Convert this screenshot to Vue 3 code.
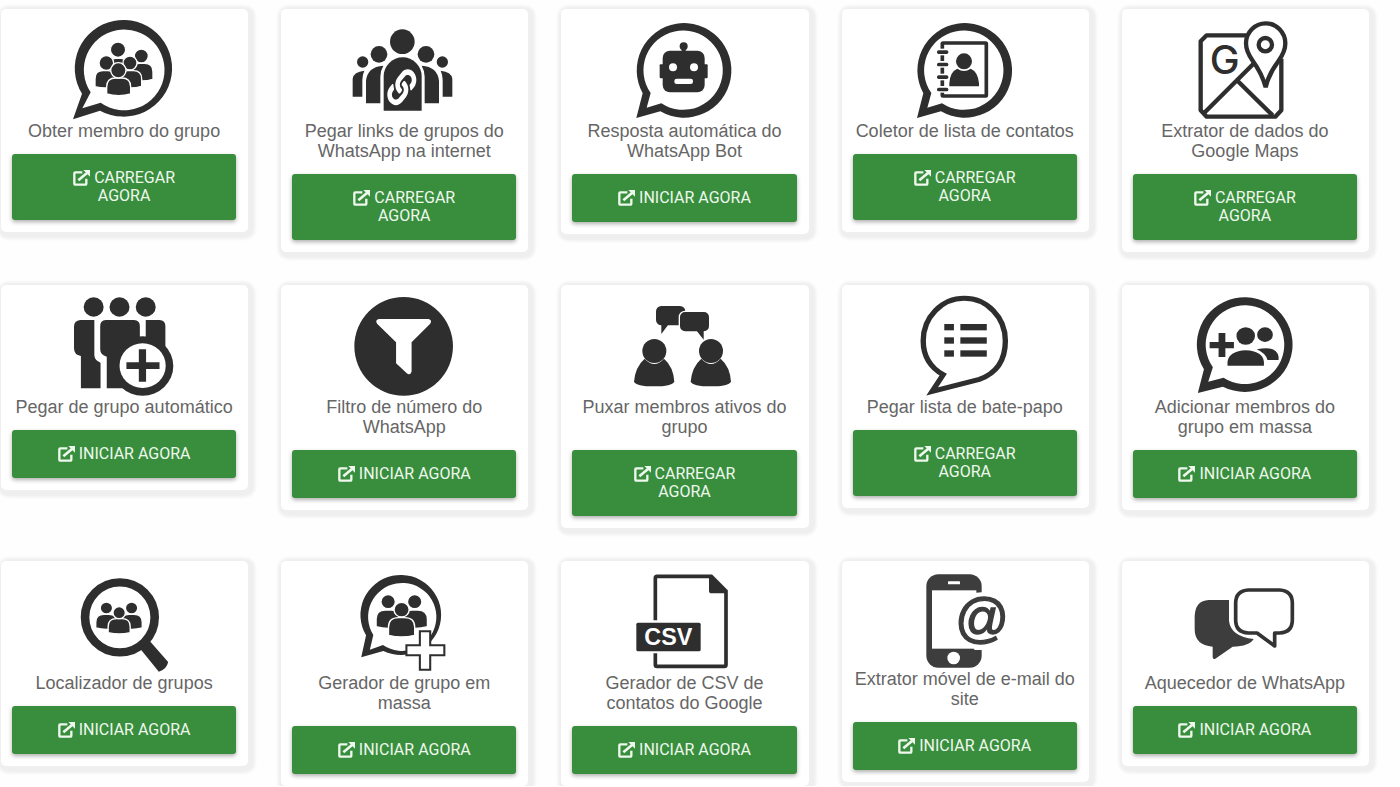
<script setup>
// Rounded head-and-shoulders torso between two x edges
const torso = (l, r, t, b) => {
  const w = r - l
  const k = Math.round(w * 0.38)
  const d = Math.round(w * 0.07)
  return `M${l} ${b - d}V${t + k}Q${l} ${t} ${l + k} ${t}H${r - k}Q${r} ${t} ${r} ${t + k}V${b - d}Q${(l + r) / 2} ${b + d} ${l} ${b - d}Z`
}
const person = (cx, cy, r, left, right, top, bottom) => ({ cx, cy, r, d: torso(left, right, top, bottom) })

const crowds = {
  members: [
    person(357, 149, 22, 328, 388, 175, 225),
    person(427, 168, 20, 396, 462, 190, 243),
    person(322, 189, 21, 288, 350, 212, 264),
    person(393, 189, 20, 362, 428, 212, 264),
    person(358, 211, 22, 323, 395, 234, 287)
  ],
  finder: [
    person(310, 176, 17, 279, 341, 195, 240),
    person(383, 176, 17, 352, 414, 195, 240),
    person(347, 190, 17, 315, 379, 208, 254)
  ],
  creator: [
    person(1129, 157, 20, 1094, 1166, 182, 237),
    person(1206, 157, 20, 1170, 1243, 182, 237),
    person(1168, 181, 21, 1130, 1206, 205, 263)
  ]
}

const LOAD = 'Carregar agora'
const START = 'Iniciar agora'

const cards = [
  { icon: 'members', box: '225 63 300 300', title: 'Obter membro do grupo', action: LOAD },
  { icon: 'links', box: '226 63 300 300', title: 'Pegar links de grupos do WhatsApp na internet', action: LOAD },
  { icon: 'bot', box: '226 63 300 300', title: 'Resposta automática do WhatsApp Bot', action: START },
  { icon: 'contacts', box: '227 63 300 300', title: 'Coletor de lista de contatos', action: LOAD },
  { icon: 'maps', box: '227 63 300 300', title: 'Extrator de dados do Google Maps', action: LOAD },
  { icon: 'autogroup', box: '216 81 290 300', title: 'Pegar de grupo automático', action: START },
  { icon: 'filter', box: '1030 81 290 300', title: 'Filtro de número do WhatsApp', action: START },
  { icon: 'active', box: '226 81 300 300', title: 'Puxar membros ativos do grupo', action: LOAD },
  { icon: 'chatlist', box: '210 81 280 300', title: 'Pegar lista de bate-papo', action: LOAD },
  { icon: 'addmembers', box: '994 81 280 300', title: 'Adicionar membros do grupo em massa', action: START },
  { icon: 'finder', box: '216 71 290 300', title: 'Localizador de grupos', action: START },
  { icon: 'creator', box: '1030 71 290 300', title: 'Gerador de grupo em massa', action: START },
  { icon: 'csv', box: '226 71 300 300', title: 'Gerador de CSV de contatos do Google', action: START },
  { icon: 'mobile', box: '227 71 300 288', title: 'Extrator móvel de e-mail do site', action: START },
  { icon: 'warmer', box: '227 71 300 300', title: 'Aquecedor de WhatsApp', action: START }
]
</script>

<template>
  <main class="tools">
    <article v-for="card in cards" :key="card.icon" class="card">
      <svg class="art" :class="{ short: card.icon === 'mobile' }" :viewBox="card.box" preserveAspectRatio="none" aria-hidden="true">
        <path v-if="card.icon === 'members'" fill-rule="evenodd"
          d="M249 281A146 145 0 1 1 303 332L222 358ZM275 277A121 121 0 1 1 305 308L250 325Z" />

        <g v-else-if="card.icon === 'links'">
          <circle cx="371" cy="125" r="37" />
          <path d="M315 332V229A57 57 0 0 1 429 229V332Z" />
          <g v-for="side in ['', 'translate(743 0) scale(-1 1)']" :key="side" :transform="side">
            <circle cx="301" cy="163" r="25" />
            <circle cx="252" cy="186" r="17" />
            <path d="M262 310V243Q266 200 314 197Q306 210 305 230V310Z" />
            <path d="M222 290V236Q225 215 257 212Q251 225 251 240V290Z" />
          </g>
          <path class="white" transform="translate(326 208) scale(.17 .21)"
            d="M326.612 185.391c59.747 59.809 58.927 155.698.36 214.59-.11.12-.24.25-.36.37l-67.2 67.2c-59.27 59.27-155.699 59.262-214.96 0-59.27-59.26-59.27-155.7 0-214.96l37.106-37.106c9.84-9.84 26.786-3.3 27.294 10.606.648 17.722 3.826 35.527 9.69 52.721 1.986 5.822.567 12.262-3.783 16.612l-13.087 13.087c-28.026 28.026-28.905 73.66-1.155 101.96 28.024 28.579 74.086 28.749 102.325.51l67.2-67.19c28.191-28.191 28.073-73.757 0-101.83-3.701-3.694-7.429-6.564-10.341-8.569a16.037 16.037 0 0 1-6.947-12.606c-.396-10.567 3.348-21.456 11.698-29.806l21.054-21.055c5.521-5.521 14.182-6.199 20.584-1.731a152.482 152.482 0 0 1 20.522 17.197zM467.547 44.449c-59.261-59.262-155.69-59.27-214.96 0l-67.2 67.2c-.12.12-.25.25-.36.37-58.566 58.892-59.387 154.781.36 214.59a152.454 152.454 0 0 0 20.521 17.196c6.402 4.468 15.064 3.789 20.584-1.731l21.054-21.055c8.35-8.35 12.094-19.239 11.698-29.806a16.037 16.037 0 0 0-6.947-12.606c-2.912-2.005-6.64-4.875-10.341-8.569-28.073-28.073-28.191-73.639 0-101.83l67.2-67.19c28.239-28.239 74.3-28.069 102.325.51 27.75 28.3 26.872 73.934-1.155 101.96l-13.087 13.087c-4.35 4.35-5.769 10.79-3.783 16.612 5.864 17.194 9.042 34.999 9.69 52.721.509 13.906 17.454 20.446 27.294 10.606l37.106-37.106c59.271-59.259 59.271-155.699.001-214.959z" />
        </g>

        <g v-else-if="card.icon === 'bot'">
          <path fill-rule="evenodd" d="M252 280A142 142 0 1 1 305 334L233 354ZM276 279A119 119 0 1 1 308 310L264 323Z" />
          <circle cx="375" cy="139" r="12" />
          <rect x="369" y="140" width="12" height="20" />
          <rect x="312" y="152" width="126" height="125" rx="22" />
          <rect x="303" y="193" width="144" height="42" rx="3" />
          <circle class="white" cx="343" cy="202" r="12" />
          <circle class="white" cx="406" cy="202" r="12" />
          <rect class="white" x="347" y="236" width="56" height="16" rx="7" />
        </g>

        <g v-else-if="card.icon === 'contacts'">
          <path fill-rule="evenodd" d="M252 280A142 142 0 1 1 305 334L233 354ZM276 279A119 119 0 1 1 308 310L264 323Z" />
          <rect class="line" x="309" y="129" width="132" height="159" rx="2" stroke-width="11" />
          <g v-for="y in [156, 193, 231, 268]" :key="y">
            <rect class="white" x="300" :y="y - 10" width="22" height="20" />
            <rect x="293" :y="y - 5" width="34" height="11" rx="5" />
          </g>
          <path d="M330 259V250Q332 215 354 206Q374 220 394 206Q416 215 419 250V259Z" />
          <circle cx="374" cy="184" r="24" />
        </g>

        <g v-else-if="card.icon === 'maps'">
          <g class="line" stroke-width="13">
            <path d="M384 106H262L244 124V331L262 350H468L486 331V176" stroke-linejoin="round" />
            <path d="M252 341L404 190M352 240L460 346" />
            <path class="paper" d="M439 262Q429 222 400 182Q380 155 380 130A59 60 0 0 1 498 130Q498 155 478 182Q448 222 439 262Z" />
            <circle cx="438" cy="134" r="20" />
          </g>
          <text class="letter" x="316" y="221" font-size="120">G</text>
        </g>

        <g v-else-if="card.icon === 'autogroup'">
          <circle cx="273" cy="111" r="29" />
          <circle cx="348" cy="111" r="29" />
          <circle cx="424" cy="111" r="29" />
          <path d="M234 150H275V256Q276 272 293 278V355H236V258Q216 255 216 235V170Q216 152 234 150Z" />
          <path d="M308 150H390Q407 152 407 168V300H370V355H311V260Q292 255 292 238V168Q292 152 308 150Z" />
          <path d="M424 150H464Q481 152 481 168V250H424Z" />
          <circle cx="415" cy="288" r="89" />
          <circle class="white" cx="415" cy="287" r="67" />
          <path d="M404 238H425V277H464V297H425V335H404V297H368V277H404Z" />
        </g>

        <g v-else-if="card.icon === 'filter'">
          <ellipse cx="1174" cy="229" rx="143" ry="148" />
          <path class="white" d="M1102 147H1246Q1258 150 1251 161L1197 217V305Q1192 318 1183 310L1152 280V217L1097 161Q1090 150 1102 147Z" />
        </g>

        <g v-else-if="card.icon === 'active'">
          <rect x="292" y="108" width="88" height="58" rx="16" />
          <path d="M308 160V192L332 160Z" />
          <rect class="edged" x="362" y="124" width="91" height="62" rx="17" />
          <path d="M412 180L435 209V180Z" />
          <g v-for="dx in [0, 170]" :key="dx" :transform="`translate(${dx} 0)`">
            <path d="M226 335Q230 290 258 266Q287 298 316 266Q344 290 347 335Q340 349 287 349Q232 349 226 335Z" />
            <circle cx="287" cy="243" r="36" />
          </g>
        </g>

        <g v-else-if="card.icon === 'chatlist'">
          <path class="line" stroke-width="15" d="M289 314Q233 280 233 212A115 127 0 0 1 463 212Q463 300 390 328L258 364Z" />
          <g v-for="y in [162, 202, 241]" :key="y">
            <rect x="292" :y="y" width="27" height="19" />
            <rect x="337" :y="y" width="74" height="19" />
          </g>
        </g>

        <g v-else-if="card.icon === 'addmembers'">
          <path fill-rule="evenodd" d="M1019 298A134 142 0 1 1 1072 350L1002 369ZM1044 292A110 118 0 1 1 1074 323L1031 335Z" />
          <path d="M1060 189H1079V216H1103V235H1079V261H1060V235H1035V216H1060Z" />
          <circle cx="1136" cy="198" r="26" />
          <circle cx="1190" cy="194" r="22" />
          <path d="M1085 287V275Q1090 243 1136 241Q1183 243 1187 275V287Z" />
          <path d="M1167 238Q1222 225 1228 260V270H1197Q1192 250 1167 238Z" />
        </g>

        <g v-else-if="card.icon === 'finder'">
          <ellipse class="line" cx="349" cy="204" rx="101" ry="105" stroke-width="25" />
          <path d="M408 298L435 274L489 338Q485 360 462 367Z" />
        </g>

        <path v-else-if="card.icon === 'creator'" fill-rule="evenodd"
          d="M1065 258A117 120 0 1 1 1115 305L1051 324ZM1086 257A99 102 0 1 1 1114 287L1076 301Z" />

        <g v-else-if="card.icon === 'csv'">
          <path class="line" stroke-width="11" d="M290 213V86Q290 81 295 81H458L502 125V346Q502 351 497 351H295Q290 351 290 346V312" />
          <path d="M451 78V125Q451 132 459 132H505L458 78Z" />
          <rect x="233" y="220" width="193" height="86" rx="5" />
          <text class="tag" x="329" y="288" font-size="70">CSV</text>
        </g>

        <g v-else-if="card.icon === 'mobile'" class="slate">
          <rect x="261" y="75" width="166" height="280" rx="36" />
          <rect class="white" x="278" y="123" width="133" height="175" />
          <rect class="white" x="405" y="131" width="26" height="171" />
          <rect class="white" x="326" y="96" width="36" height="9" rx="2" />
          <circle class="white" cx="343" cy="326" r="19" />
          <ellipse class="white" cx="427" cy="215" rx="84" ry="86" />
          <text class="at" x="428" y="260" font-size="160">@</text>
        </g>

        <g v-else class="slate">
          <path d="M268 152H329V215Q335 262 403 269Q390 291 340 292L288 328Q280 332 280 322V292Q226 288 226 240V200Q228 154 268 152Z" />
          <path class="line" stroke-width="11"
            d="M387 122H481Q519 124 519 162V212Q519 249 481 251H466V290L413 251H387Q349 249 349 212V162Q349 124 387 122Z" stroke-linejoin="round" />
        </g>

        <g v-for="(p, i) in crowds[card.icon] || []" :key="i" class="edged">
          <path :d="p.d" />
          <circle :cx="p.cx" :cy="p.cy" :r="p.r + 1" />
        </g>
        <path v-if="card.icon === 'creator'" class="line paper" stroke-width="6"
          d="M1221 246H1251V288H1292V318H1251V361H1221V318H1182V288H1221Z" />
      </svg>
      <h2 class="title">{{ card.title }}</h2>
      <button class="action" type="button">
        <svg class="launch" viewBox="0 0 51 48" aria-hidden="true">
          <path d="M28 7H7Q4 7 4 10V41Q4 44 7 44H37Q40 44 40 41V26" stroke-width="7" />
          <path d="M16 31L42 9" stroke-width="8" />
          <path class="head" d="M31 0H51V20Z" />
        </svg>
        {{ card.action }}
      </button>
    </article>
  </main>
</template>

<style>
body {
  margin: 0;
  background: #fefefe;
}
</style>

<style scoped>
.tools {
  display: grid;
  grid-template-columns: repeat(5, 1fr);
  align-items: start;
  gap: 33px;
  padding: 9px 31px 0 1px;
  font-family: "Liberation Sans", Arial, sans-serif;
}

.card {
  display: flex;
  flex-direction: column;
  align-items: center;
  padding: 12px 12px 12px 11px;
  border-radius: 5px;
  background: #fff;
  box-shadow: 2px 2px 3px 5px #efefef;
}

.art {
  width: 100px;
  height: 100px;
  overflow: visible;
  fill: #2e2e2e;
  stroke: none;
}

.art.short {
  height: 96px;
}

.art .slate {
  fill: #3d3d3e;
}

.art .white {
  fill: #fff;
}

.art .line {
  fill: none;
  stroke: #2e2e2e;
}

.art .slate .line {
  stroke: #333334;
}

.art .paper {
  fill: #fff;
}

.art .edged {
  stroke: #fff;
  stroke-width: 4px;
}

.letter {
  font-family: Inter, sans-serif;
  font-weight: 500;
  text-anchor: middle;
}

.tag {
  fill: #fff;
  font-weight: 700;
  text-anchor: middle;
}

.at {
  stroke: #3d3d3e;
  stroke-width: 4px;
  text-anchor: middle;
}

.title {
  margin: 0 0 13px;
  color: #666;
  font-size: 18px;
  font-weight: 400;
  line-height: 20px;
  text-align: center;
}

.action {
  width: 100%;
  padding: 15px 40px;
  border: 0;
  border-radius: 3px;
  background: #398e3d;
  box-shadow: 0 2px 4px rgba(0, 0, 0, 0.32);
  color: #eef8ee;
  font-family: Roboto, sans-serif;
  font-size: 16px;
  line-height: 18px;
  text-align: center;
  text-transform: uppercase;
  cursor: pointer;
}

.launch {
  width: 17px;
  height: 16px;
  vertical-align: -3px;
  fill: none;
  stroke: currentColor;
}

.launch .head {
  fill: currentColor;
  stroke: none;
}
</style>
